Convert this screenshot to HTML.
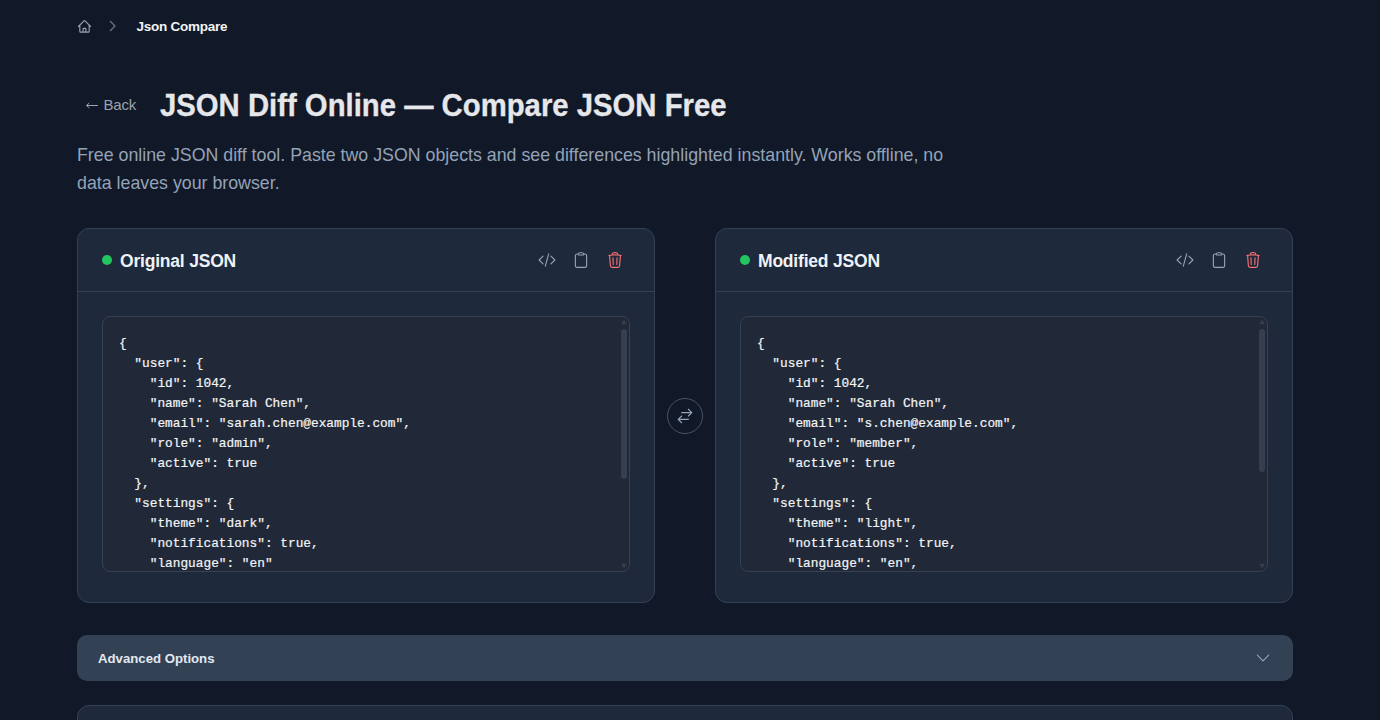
<!DOCTYPE html>
<html>
<head>
<meta charset="utf-8">
<style>
*{box-sizing:border-box;margin:0;padding:0}
html,body{width:1380px;height:720px;overflow:hidden;background:#111827;font-family:"Liberation Sans",sans-serif;color:#e5e7eb}
.abs{position:absolute}
.crumb-home{left:77px;top:18.5px;width:15px;height:15px}
.crumb-chev{left:108.4px;top:20px;width:9px;height:12px}
.crumb-text{left:136.4px;top:17.5px;font-size:13.5px;letter-spacing:-0.25px;font-weight:700;color:#f3f4f6;line-height:18px;white-space:nowrap}
.back{left:103.6px;top:94.5px;font-size:15px;letter-spacing:-0.25px;color:#9ca3af;line-height:20px;white-space:nowrap}
.back-arr{left:84.5px;top:101px;width:14px;height:9px}
.title{left:160px;top:88px;-webkit-text-stroke:0.3px #e5e7eb;transform:scaleY(1.05);transform-origin:0 0;font-size:29.3px;font-weight:700;color:#e5e7eb;line-height:34px;white-space:nowrap}
.desc{left:77px;top:141px;font-size:17.8px;color:#94a3b8;line-height:28px;width:900px}
.card{top:228px;width:578px;height:375px;background:#1e293b;border:1px solid #334155;border-radius:12px}
.card .hd{position:absolute;left:0;top:0;right:0;height:63px;border-bottom:1px solid #334155}
.dot{position:absolute;left:24px;top:26px;width:10px;height:10px;border-radius:50%;background:#22c55e}
.ctitle{position:absolute;left:42px;top:21px;font-size:17.5px;letter-spacing:-0.2px;font-weight:700;color:#eef2f6;line-height:22px;white-space:nowrap}
.ic{position:absolute;top:22px;width:18px;height:18px}
.ta{position:absolute;left:24px;top:87px;width:528px;height:256px;background:#212938;border:1px solid #374151;border-radius:8px;overflow:hidden}
.code{position:absolute;left:16px;top:17px;-webkit-text-stroke:0.2px #f3f4f6;font-family:"Liberation Mono",monospace;font-size:12.8px;line-height:20px;color:#f3f4f6;white-space:pre}
.sb-up{position:absolute;left:518px;top:2px;width:6px;height:6px}
.sb-dn{position:absolute;left:518px;top:246px;width:6px;height:6px}
.sb-th{position:absolute;left:518px;top:12px;width:6px;border-radius:3px;background:#363f50}
.swap{left:667px;top:398px;width:36px;height:36px;border:1px solid #475569;border-radius:50%}
.adv{left:77px;top:635px;width:1216px;height:46px;background:#334155;border-radius:10px}
.adv-t{position:absolute;left:21px;top:14.5px;font-size:13.2px;font-weight:700;color:#e2e8f0;line-height:18px;white-space:nowrap}
.card2{left:77px;top:705px;width:1216px;height:100px;background:#1e293b;border:1px solid #334155;border-radius:12px}
svg{display:block}
</style>
</head>
<body>
<!-- breadcrumb -->
<svg class="abs crumb-home" viewBox="0 0 24 24" fill="none" stroke="#9ca3af" stroke-width="1.8" stroke-linecap="round" stroke-linejoin="round"><path d="m2.25 12 8.954-8.955c.44-.439 1.152-.439 1.591 0L21.75 12M4.5 9.75v10.125c0 .621.504 1.125 1.125 1.125H9.75v-4.875c0-.621.504-1.125 1.125-1.125h2.25c.621 0 1.125.504 1.125 1.125V21h4.125c.621 0 1.125-.504 1.125-1.125V9.75M8.25 21h8.25"/></svg>
<svg class="abs crumb-chev" viewBox="0 0 9 12" fill="none" stroke="#6b7280" stroke-width="1.3"><path d="M2 1l5 5-5 5"/></svg>
<div class="abs crumb-text">Json Compare</div>

<svg class="abs back-arr" viewBox="0 0 14 9" fill="none" stroke="#9ca3af" stroke-width="1"><path d="M1.5 4.5h11.5M4.3 2 1.5 4.5l2.8 2.5"/></svg><div class="abs back">Back</div>
<div class="abs title">JSON Diff Online — Compare JSON Free</div>
<div class="abs desc">Free online JSON diff tool. Paste two JSON objects and see differences highlighted instantly. Works offline, no data leaves your browser.</div>

<!-- left card -->
<div class="abs card" style="left:77px">
  <div class="hd">
    <div class="dot"></div>
    <div class="ctitle">Original JSON</div>
    <svg class="ic" style="left:460px" viewBox="0 0 24 24" fill="none" stroke="#94a3b8" stroke-width="1.5" stroke-linecap="round" stroke-linejoin="round"><path d="M17.25 6.75 22.5 12l-5.25 5.25m-10.5 0L1.5 12l5.25-5.25m7.5-3-4.5 16.5"/></svg>
    <svg class="ic" style="left:494px" viewBox="0 0 24 24" fill="none" stroke="#94a3b8" stroke-width="1.5" stroke-linecap="round" stroke-linejoin="round"><path d="M15.666 3.888A2.25 2.25 0 0 0 13.5 2.25h-3c-1.03 0-1.9.693-2.166 1.638m7.332 0c.055.194.084.4.084.612v0a.75.75 0 0 1-.75.75H9a.75.75 0 0 1-.75-.75v0c0-.212.03-.418.084-.612m7.332 0c.646.049 1.288.11 1.927.184 1.1.128 1.907 1.077 1.907 2.185V19.5a2.25 2.25 0 0 1-2.25 2.25H6.75A2.25 2.25 0 0 1 4.5 19.5V6.257c0-1.108.806-2.057 1.907-2.185a48.208 48.208 0 0 1 1.927-.184"/></svg>
    <svg class="ic" style="left:528px" viewBox="0 0 24 24" fill="none" stroke="#f87171" stroke-width="1.5" stroke-linecap="round" stroke-linejoin="round"><path d="m14.74 9-.346 9m-4.788 0L9.26 9m9.968-3.21c.342.052.682.107 1.022.166m-1.022-.165L18.16 19.673a2.25 2.25 0 0 1-2.244 2.077H8.084a2.25 2.25 0 0 1-2.244-2.077L4.772 5.79m14.456 0a48.108 48.108 0 0 0-3.478-.397m-12 .562c.34-.059.68-.114 1.022-.165m0 0a48.11 48.11 0 0 1 3.478-.397m7.5 0v-.916c0-1.18-.91-2.164-2.09-2.201a51.964 51.964 0 0 0-3.32 0c-1.18.037-2.09 1.022-2.09 2.201v.916m7.5 0a48.667 48.667 0 0 0-7.5 0"/></svg>
  </div>
  <div class="ta">
<div class="code">{
  "user": {
    "id": 1042,
    "name": "Sarah Chen",
    "email": "sarah.chen@example.com",
    "role": "admin",
    "active": true
  },
  "settings": {
    "theme": "dark",
    "notifications": true,
    "language": "en"
  }
}</div>
<svg class="sb-up" viewBox="0 0 6 6"><path d="M3 0.8 6 5.2H0z" fill="#363f50"/></svg><div class="sb-th" style="height:150px"></div><svg class="sb-dn" viewBox="0 0 6 6"><path d="M0 0.8H6L3 5.2z" fill="#363f50"/></svg>
  </div>
</div>

<!-- swap -->
<div class="abs swap"><svg style="position:absolute;left:8px;top:8px" width="18" height="18" viewBox="0 0 24 24" fill="none" stroke="#94a3b8" stroke-width="1.5" stroke-linecap="round" stroke-linejoin="round"><path d="M7.5 21 3 16.5m0 0L7.5 12M3 16.5h13.5m0-13.5L21 7.5m0 0L16.5 12M21 7.5H7.5"/></svg></div>

<!-- right card -->
<div class="abs card" style="left:715px">
  <div class="hd">
    <div class="dot"></div>
    <div class="ctitle">Modified JSON</div>
    <svg class="ic" style="left:460px" viewBox="0 0 24 24" fill="none" stroke="#94a3b8" stroke-width="1.5" stroke-linecap="round" stroke-linejoin="round"><path d="M17.25 6.75 22.5 12l-5.25 5.25m-10.5 0L1.5 12l5.25-5.25m7.5-3-4.5 16.5"/></svg>
    <svg class="ic" style="left:494px" viewBox="0 0 24 24" fill="none" stroke="#94a3b8" stroke-width="1.5" stroke-linecap="round" stroke-linejoin="round"><path d="M15.666 3.888A2.25 2.25 0 0 0 13.5 2.25h-3c-1.03 0-1.9.693-2.166 1.638m7.332 0c.055.194.084.4.084.612v0a.75.75 0 0 1-.75.75H9a.75.75 0 0 1-.75-.75v0c0-.212.03-.418.084-.612m7.332 0c.646.049 1.288.11 1.927.184 1.1.128 1.907 1.077 1.907 2.185V19.5a2.25 2.25 0 0 1-2.25 2.25H6.75A2.25 2.25 0 0 1 4.5 19.5V6.257c0-1.108.806-2.057 1.907-2.185a48.208 48.208 0 0 1 1.927-.184"/></svg>
    <svg class="ic" style="left:528px" viewBox="0 0 24 24" fill="none" stroke="#f87171" stroke-width="1.5" stroke-linecap="round" stroke-linejoin="round"><path d="m14.74 9-.346 9m-4.788 0L9.26 9m9.968-3.21c.342.052.682.107 1.022.166m-1.022-.165L18.16 19.673a2.25 2.25 0 0 1-2.244 2.077H8.084a2.25 2.25 0 0 1-2.244-2.077L4.772 5.790m14.456 0a48.108 48.108 0 0 0-3.478-.397m-12 .562c.34-.059.68-.114 1.022-.165m0 0a48.11 48.11 0 0 1 3.478-.397m7.5 0v-.916c0-1.18-.91-2.164-2.09-2.201a51.964 51.964 0 0 0-3.32 0c-1.18.037-2.09 1.022-2.090 2.201v.916m7.5 0a48.667 48.667 0 0 0-7.5 0"/></svg>
  </div>
  <div class="ta">
<div class="code">{
  "user": {
    "id": 1042,
    "name": "Sarah Chen",
    "email": "s.chen@example.com",
    "role": "member",
    "active": true
  },
  "settings": {
    "theme": "light",
    "notifications": true,
    "language": "en",
    "timezone": "UTC"
  }
}</div>
<svg class="sb-up" viewBox="0 0 6 6"><path d="M3 0.8 6 5.2H0z" fill="#363f50"/></svg><div class="sb-th" style="height:143px"></div><svg class="sb-dn" viewBox="0 0 6 6"><path d="M0 0.8H6L3 5.2z" fill="#363f50"/></svg>
  </div>
</div>

<!-- advanced options -->
<div class="abs adv">
  <div class="adv-t">Advanced Options</div>
  <svg style="position:absolute;left:1177px;top:14px" width="18" height="18" viewBox="0 0 24 24" fill="none" stroke="#94a3b8" stroke-width="1.5" stroke-linecap="round" stroke-linejoin="round"><path d="m19.5 8.25-7.5 7.5-7.5-7.5"/></svg>
</div>
<div class="abs card2"></div>
</body>
</html>
